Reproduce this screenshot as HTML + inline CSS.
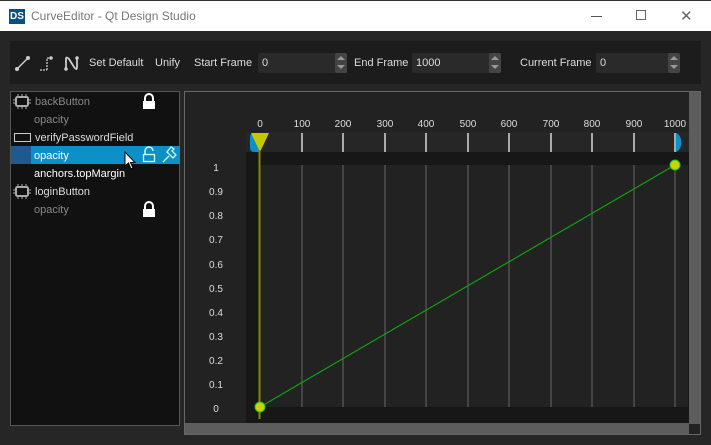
<!DOCTYPE html>
<html><head><meta charset="utf-8"><style>
*{margin:0;padding:0;box-sizing:border-box}
body{width:711px;height:445px;background:#262626;font-family:"Liberation Sans",sans-serif;font-size:11px;color:#ddd;position:relative;overflow:hidden}
.a{position:absolute;white-space:nowrap}
.title{left:0;top:0;width:711px;height:31px;background:#fff;border-top:1px solid #333}
.spin{background:#2a2a2a;height:20px;top:53px;border-radius:2px}
.arr{position:absolute;right:0;top:0;width:12px;height:20px;background:#444;border-radius:2px}
.arr:before{content:"";position:absolute;left:2px;top:3px;border:4px solid transparent;border-bottom:4px solid #999;border-top:0}
.arr:after{content:"";position:absolute;left:2px;top:12px;border:4px solid transparent;border-top:4px solid #999;border-bottom:0}
.lbl{color:#ddd;font-size:11px}
.chip{width:14px;height:11px;border:2px solid #aaa;border-radius:2px}
</style></head><body>
<div class="a title">
 <div class="a" style="left:9px;top:8px;width:16px;height:15px;background:#0b4f7c;color:#fff;font-size:10px;font-weight:bold;line-height:15px;text-align:center">DS</div>
 <div class="a" style="left:31px;top:8px;font-size:12px;color:#777">CurveEditor - Qt Design Studio</div>
 <div class="a" style="left:591px;top:15px;width:11px;height:1px;background:#555"></div>
 <div class="a" style="left:636px;top:9px;width:10px;height:10px;border:1px solid #666"></div>
 <div class="a" style="left:680px;top:6px;font-size:15px;color:#666">✕</div>
</div>
<div class="a" style="left:10px;top:41px;width:691px;height:43px;background:#1c1c1c"></div>
<svg class="a" style="left:14px;top:53px" width="72" height="20">
 <line x1="3" y1="16" x2="14" y2="5" stroke="#ccc" stroke-width="1.5"/><circle cx="3" cy="16" r="2" fill="#ccc"/><circle cx="14" cy="5" r="2" fill="#ccc"/>
 <path d="M26 17 H33 M33 17 V5 H38" stroke="#ccc" fill="none" stroke-dasharray="2 1" stroke-width="1.3"/><circle cx="37" cy="5" r="1.8" fill="#ccc"/>
 <path d="M52 17 V6 Q52 3 55 6 L60 14 Q63 18 63 14 V5" stroke="#ccc" fill="none" stroke-width="1.8"/><circle cx="52" cy="16" r="1.8" fill="#ccc"/><circle cx="63" cy="5" r="1.8" fill="#ccc"/>
</svg>
<div class="a lbl" style="left:89px;top:57px">Set Default</div>
<div class="a lbl" style="left:155px;top:57px">Unify</div>
<div class="a lbl" style="left:194px;top:57px">Start Frame</div>
<div class="a spin" style="left:258px;width:89px"><span class="a" style="left:4px;top:4px">0</span><div class="arr"></div></div>
<div class="a lbl" style="left:354px;top:57px">End Frame</div>
<div class="a spin" style="left:412px;width:89px"><span class="a" style="left:4px;top:4px">1000</span><div class="arr"></div></div>
<div class="a lbl" style="left:520px;top:57px">Current Frame</div>
<div class="a spin" style="left:596px;width:84px"><span class="a" style="left:4px;top:4px">0</span><div class="arr"></div></div>

<div class="a" style="left:10px;top:91px;width:170px;height:335px;background:#111;border:1px solid #555"></div>
<div class="a" style="left:11px;top:146px;width:20px;height:18px;background:#1e5a8f"></div>
<div class="a" style="left:31px;top:146px;width:149px;height:18px;background:#0d8fc8"></div>
<svg class="a" style="left:13px;top:94px" width="18" height="15"><rect x="3" y="3" width="12" height="9" rx="1.5" fill="none" stroke="#aaa" stroke-width="2"/><path d="M5 0v3M9 0v3M13 0v3M5 12v3M9 12v3M13 12v3M0 6h3M0 9h3M15 6h3M15 9h3" stroke="#aaa"/></svg>
<div class="a" style="left:35px;top:96px;color:#888">backButton</div>
<div class="a" style="left:34px;top:114px;color:#888">opacity</div>
<div class="a" style="left:14px;top:133px;width:17px;height:9px;border:1px solid #ccc"></div>
<div class="a" style="left:35px;top:132px">verifyPasswordField</div>
<div class="a" style="left:34px;top:150px;color:#fff">opacity</div>
<div class="a" style="left:34px;top:168px;color:#fff">anchors.topMargin</div>
<svg class="a" style="left:13px;top:184px" width="18" height="15"><rect x="3" y="3" width="12" height="9" rx="1.5" fill="none" stroke="#aaa" stroke-width="2"/><path d="M5 0v3M9 0v3M13 0v3M5 12v3M9 12v3M13 12v3M0 6h3M0 9h3M15 6h3M15 9h3" stroke="#aaa"/></svg>
<div class="a" style="left:35px;top:186px">loginButton</div>
<div class="a" style="left:34px;top:204px;color:#888">opacity</div>
<svg class="a" style="left:141px;top:93px" width="16" height="16"><path d="M4 8V5a4 4 0 0 1 8 0v3" stroke="#fff" stroke-width="2" fill="none"/><rect x="2" y="8" width="12" height="8" fill="#fff"/></svg>
<svg class="a" style="left:141px;top:201px" width="16" height="16"><path d="M4 8V5a4 4 0 0 1 8 0v3" stroke="#fff" stroke-width="2" fill="none"/><rect x="2" y="8" width="12" height="8" fill="#fff"/></svg>
<svg class="a" style="left:141px;top:146px" width="16" height="17"><path d="M4 8V5a4 4 0 0 1 8 0" stroke="#cfe" stroke-width="1.5" fill="none"/><rect x="2.5" y="8.5" width="11" height="7" fill="none" stroke="#cfe" stroke-width="1.3"/></svg>
<svg class="a" style="left:161px;top:146px" width="18" height="17"><path d="M2 16 L8 10 M6 6 L12 12 L15 9 L11 5 L13 3 L10 1 L6 6Z" stroke="#cfe" stroke-width="1.3" fill="none"/></svg>
<svg class="a" style="left:124px;top:151px" width="14" height="20"><path d="M1 1 V15 L4.5 12 L7 18 L9 17 L6.5 11.5 L11 11.5Z" fill="#fff" stroke="#000"/></svg>

<div class="a" style="left:184px;top:91px;width:517px;height:344px;background:#222;border:1px solid #666"></div>
<div class="a" style="left:689px;top:92px;width:11px;height:332px;background:#5d5d5d"></div>
<div class="a" style="left:185px;top:423px;width:504px;height:11px;background:#5d5d5d"></div>
<div class="a" style="left:246px;top:132px;width:443px;height:291px;background:#171717"></div>
<div class="a" style="left:246px;top:132px;width:443px;height:20px;background:#262626"></div>
<div class="a" style="left:260px;top:165px;width:428px;height:242px;background:#222"></div>
<svg class="a" style="left:0;top:0" width="711" height="445">
 <g font-family="Liberation Sans" font-size="10" fill="#ddd" text-anchor="middle">
  <text x="260" y="127">0</text><text x="302" y="127">100</text><text x="343" y="127">200</text><text x="385" y="127">300</text><text x="426" y="127">400</text><text x="468" y="127">500</text><text x="509" y="127">600</text><text x="551" y="127">700</text><text x="592" y="127">800</text><text x="634" y="127">900</text><text x="675" y="127">1000</text>
 </g>
 <g font-family="Liberation Sans" font-size="10" fill="#ddd" text-anchor="middle">
  <text x="216" y="171">1</text><text x="216" y="195">0.9</text><text x="216" y="219">0.8</text><text x="216" y="243">0.7</text><text x="216" y="268">0.6</text><text x="216" y="292">0.5</text><text x="216" y="316">0.4</text><text x="216" y="340">0.3</text><text x="216" y="364">0.2</text><text x="216" y="388">0.1</text><text x="216" y="412">0</text>
 </g>
 <g stroke="#aaa" stroke-width="2">
  <line x1="302" y1="133" x2="302" y2="152"/><line x1="343" y1="133" x2="343" y2="152"/><line x1="385" y1="133" x2="385" y2="152"/><line x1="426" y1="133" x2="426" y2="152"/><line x1="468" y1="133" x2="468" y2="152"/><line x1="509" y1="133" x2="509" y2="152"/><line x1="551" y1="133" x2="551" y2="152"/><line x1="592" y1="133" x2="592" y2="152"/><line x1="634" y1="133" x2="634" y2="152"/><line x1="675" y1="133" x2="675" y2="152"/>
 </g>
 <g stroke="#454545" stroke-width="2">
  <line x1="302" y1="165" x2="302" y2="407"/><line x1="343" y1="165" x2="343" y2="407"/><line x1="385" y1="165" x2="385" y2="407"/><line x1="426" y1="165" x2="426" y2="407"/><line x1="468" y1="165" x2="468" y2="407"/><line x1="509" y1="165" x2="509" y2="407"/><line x1="551" y1="165" x2="551" y2="407"/><line x1="592" y1="165" x2="592" y2="407"/><line x1="634" y1="165" x2="634" y2="407"/><line x1="675" y1="165" x2="675" y2="407"/>
 </g>
 <path d="M676 133 A8 10 0 0 1 676 152Z" fill="#0d8fc8"/>
 <path d="M258 133 H254 A4 4 0 0 0 250 137 V148 A4 4 0 0 0 254 152 H260Z" fill="#0d8fc8"/>
 <path d="M251 133 H269 L260 152Z" fill="#c8c800"/>
 <line x1="259.5" y1="150" x2="259.5" y2="419" stroke="#8a8a00" stroke-width="2"/>
 <line x1="260" y1="407" x2="675" y2="165" stroke="#10a010" stroke-width="1.2"/>
 <circle cx="260" cy="407" r="5" fill="#c8d400" stroke="#20c020"/>
 <circle cx="675" cy="165" r="5" fill="#c8d400" stroke="#20c020"/>
</svg>
</body></html>
